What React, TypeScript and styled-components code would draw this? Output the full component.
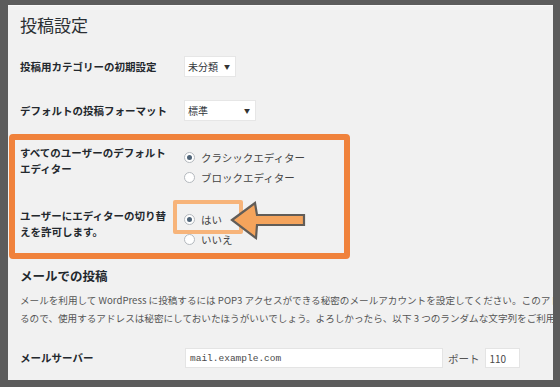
import styled, { createGlobalStyle } from 'styled-components'

const GlobalStyle = createGlobalStyle`
  html, body {
    margin: 0;
    padding: 0;
    background: #5c5c5c;
  }
  body {
    width: 560px;
    height: 387px;
    overflow: hidden;
    font-family: "Noto Sans CJK JP", "Noto Sans", sans-serif;
  }
`

type Choice = { label: string; checked?: boolean }

const editorChoices: Choice[] = [{ label: 'クラシックエディター', checked: true }, { label: 'ブロックエディター' }]
const switchChoices: Choice[] = [{ label: 'はい', checked: true }, { label: 'いいえ' }]

function RadioList({ items, marked }: { items: Choice[]; marked?: boolean }) {
  return (
    <Radios $top={marked ? 1 : 2}>
      {items.map((item) => (
        <RadioItem key={item.label}>
          <RadioDot $checked={!!item.checked} />
          <span>{item.label}</span>
        </RadioItem>
      ))}
      {marked && (
        <>
          <Highlight />
          <Arrow width='80' height='42' viewBox='0 0 80 42'>
            <polygon
              points='3,20 26,3 28,15 75,15 75,25 28,25 27,38'
              fill='#f5a45c'
              stroke='#625d58'
              strokeWidth='2.2'
              strokeLinejoin='miter'
            />
          </Arrow>
        </>
      )}
    </Radios>
  )
}

function App() {
  return (
    <>
      <GlobalStyle />
      <Page>
        <Title>投稿設定</Title>

        <Row $top={19}>
          <Label $line={22}>投稿用カテゴリーの初期設定</Label>
          <Select $width={52}>
            <span>未分類</span>
            <Caret>▼</Caret>
          </Select>
        </Row>

        <Row $top={22}>
          <Label $line={22}>デフォルトの投稿フォーマット</Label>
          <Select $width={72}>
            <span>標準</span>
            <Caret>▼</Caret>
          </Select>
        </Row>

        <MarkBox>
          <Row $top={0} $inset={0}>
            <Label $line={16}>
              すべてのユーザーのデフォルト
              <br />
              エディター
            </Label>
            <RadioList items={editorChoices} />
          </Row>
          <Row $top={21} $inset={0}>
            <Label $line={16}>
              ユーザーにエディターの切り替
              <br />
              えを許可します。
            </Label>
            <RadioList items={switchChoices} marked />
          </Row>
        </MarkBox>

        <Heading>メールでの投稿</Heading>
        <Description>
          <div>
            メールを利用して WordPress に投稿するには POP3
            アクセスができる秘密のメールアカウントを設定してください。このアドレスで受信したメールはすべてサイトに投稿され
          </div>
          <div>
            るので、使用するアドレスは秘密にしておいたほうがいいでしょう。よろしかったら、以下 3
            つのランダムな文字列をご利用ください:
          </div>
        </Description>

        <Row $top={21}>
          <Label $line={20}>メールサーバー</Label>
          <Fields>
            <TextInput $width={258}>
              <InputText>mail.example.com</InputText>
            </TextInput>
            <FieldNote>ポート</FieldNote>
            <TextInput $width={35} $plain>
              <InputText>110</InputText>
            </TextInput>
          </Fields>
        </Row>
      </Page>
    </>
  )
}

const Page = styled.div`
  margin: 5px 7px 7px 8px;
  width: 545px;
  height: 375px;
  box-sizing: border-box;
  padding-left: 1px;
  background: #f1f1f1;
  border-top: 1px solid #f9f9f9;
  overflow: hidden;
  display: flex;
  flex-direction: column;
`

const Title = styled.h1`
  margin: 7px 0 0 11px;
  font-size: 17px;
  line-height: 24px;
  font-weight: 400;
  color: #2b2f33;
`

const Row = styled.div<{ $top: number; $inset?: number }>`
  display: grid;
  grid-template-columns: 164px 1fr;
  align-items: start;
  margin-top: ${(p) => p.$top}px;
  padding-left: ${(p) => p.$inset ?? 11}px;
`

const Label = styled.div<{ $line: number }>`
  font-size: 10.5px;
  font-weight: 700;
  line-height: ${(p) => p.$line}px;
  color: #23282d;
  white-space: nowrap;
`

const Select = styled.div<{ $width: number }>`
  width: ${(p) => p.$width}px;
  height: 21px;
  box-sizing: border-box;
  display: flex;
  align-items: center;
  justify-content: space-between;
  padding: 0 5px 0 3px;
  background: #fff;
  border: 1px solid #e6e6e6;
  font-size: 10px;
  color: #32373c;
`

const Caret = styled.span`
  font-size: 6px;
  color: #333;
`

const MarkBox = styled.div`
  margin-top: 12px;
  width: 341px;
  box-sizing: border-box;
  border: 6px solid #f0823c;
  border-radius: 4px;
  padding: 5px 0 4px 5px;
`

const Radios = styled.div<{ $top: number }>`
  position: relative;
  margin-top: ${(p) => p.$top}px;
  display: flex;
  flex-direction: column;
`

const RadioItem = styled.label`
  display: flex;
  align-items: center;
  gap: 6px;
  height: 20px;
  font-size: 10.5px;
  color: #444;
`

const RadioDot = styled.span<{ $checked: boolean }>`
  width: 11px;
  height: 11px;
  box-sizing: border-box;
  border-radius: 50%;
  border: 1px solid #b4b9be;
  background: #fff;
  display: flex;
  align-items: center;
  justify-content: center;

  &::before {
    content: '';
    width: 5px;
    height: 5px;
    border-radius: 50%;
    background: ${(p) => (p.$checked ? '#4f6478' : 'transparent')};
  }
`

const Highlight = styled.div`
  position: absolute;
  left: -11px;
  top: -9px;
  width: 70px;
  height: 34px;
  box-sizing: border-box;
  border: 4px solid #f7b47a;
  border-radius: 2px;
`

const Arrow = styled.svg`
  position: absolute;
  left: 45px;
  top: -9px;
`

const Heading = styled.h2`
  margin: 8px 0 0 11px;
  font-size: 12.5px;
  line-height: 18px;
  font-weight: 700;
  color: #23282d;
`

const Description = styled.div`
  margin: 6px 0 0 11px;
  font-size: 9.6px;
  line-height: 18px;
  color: #555;
  white-space: nowrap;
`

const Fields = styled.div`
  display: flex;
  align-items: center;
  gap: 5px;
  padding-left: 1px;
`

const TextInput = styled.div<{ $width: number; $plain?: boolean }>`
  width: ${(p) => p.$width}px;
  height: 20px;
  box-sizing: border-box;
  display: flex;
  align-items: center;
  padding-left: 4px;
  background: #fff;
  border: 1px solid #e4e4e4;
  font-family: ${(p) => (p.$plain ? '"Noto Sans CJK JP", "Noto Sans", sans-serif' : '"Liberation Mono", "DejaVu Sans Mono", monospace')};
  font-size: ${(p) => (p.$plain ? 10 : 9.5)}px;
`

const InputText = styled.span`
  color: #4a4a4a;
`

const FieldNote = styled.span`
  font-size: 10.5px;
  color: #555;
`

export default App
